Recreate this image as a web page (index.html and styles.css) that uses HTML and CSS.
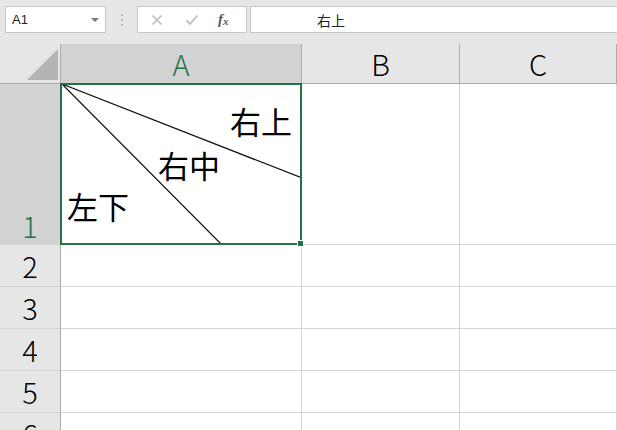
FILE: index.html
```html
<!DOCTYPE html>
<html lang="ja">
<head>
<meta charset="utf-8">
<link rel="stylesheet" href="styles.css">
</head>
<body>
<div class="app">
  <div class="toolbar">
    <div class="namebox">
      <span class="name">A1</span>
      <span class="caret"></span>
    </div>
    <div class="dots"><i></i><i></i><i></i></div>
    <div class="fbtns">
      <svg class="ico" width="12" height="12" viewBox="0 0 12 12"><path d="M1.5 1.5 L10.5 10.5 M10.5 1.5 L1.5 10.5" stroke="#bcbcbc" stroke-width="1.6" fill="none"/></svg>
      <svg class="ico" width="14" height="12" viewBox="0 0 14 12"><path d="M1.5 6.5 L5 10 L12.5 1.5" stroke="#bcbcbc" stroke-width="1.8" fill="none"/></svg>
      <span class="fx">f<span class="fxx">x</span></span>
    </div>
    <div class="finput"><span class="ftext">右上</span></div>
  </div>
  <div class="sheet">
    <div class="corner"><span class="tri"></span></div>
    <div class="ch sel">A</div>
    <div class="ch">B</div>
    <div class="ch">C</div>

    <div class="rh sel r1">1</div>
    <div class="cell a1">
      <svg class="diag" width="241" height="161" viewBox="0 0 241 161">
        <path d="M1 0 L241 94 M1 0 L161 161" stroke="#111" stroke-width="1.2" fill="none"/>
      </svg>
      <span class="t t-ru">右上</span>
      <span class="t t-rm">右中</span>
      <span class="t t-ld">左下</span>
      <div class="selbox"><span class="handle"></span></div>
    </div>
    <div class="cell"></div>
    <div class="cell"></div>

    <div class="rh">2</div><div class="cell"></div><div class="cell"></div><div class="cell"></div>
    <div class="rh">3</div><div class="cell"></div><div class="cell"></div><div class="cell"></div>
    <div class="rh">4</div><div class="cell"></div><div class="cell"></div><div class="cell"></div>
    <div class="rh">5</div><div class="cell"></div><div class="cell"></div><div class="cell"></div>
    <div class="rh">6</div><div class="cell"></div><div class="cell"></div><div class="cell"></div>
  </div>
</div>
</body>
</html>
```
FILE: styles.css
```css
html, body {
  margin: 0;
  padding: 0;
  width: 617px;
  height: 430px;
  overflow: hidden;
  background: #ffffff;
  font-family: "Noto Sans CJK JP", "Noto Sans", sans-serif;
}
.app {
  width: 617px;
  height: 430px;
  overflow: hidden;
  background: #e6e6e6;
}
.toolbar {
  height: 44px;
  box-sizing: border-box;
  padding-top: 6px;
  padding-left: 5px;
  display: flex;
  align-items: flex-start;
  background: #e6e6e6;
}
.namebox {
  width: 101px;
  height: 27px;
  box-sizing: border-box;
  border: 1px solid #c6c6c6;
  background: #fff;
  display: flex;
  align-items: center;
  justify-content: space-between;
  padding: 0 6px 0 6px;
}
.name {
  font-family: "Liberation Sans", "Noto Sans", sans-serif;
  font-size: 13px;
  color: #222;
}
.caret {
  width: 0;
  height: 0;
  border-left: 4px solid transparent;
  border-right: 4px solid transparent;
  border-top: 4px solid #7a7a7a;
}
.dots {
  width: 31px;
  height: 27px;
  display: flex;
  flex-direction: column;
  align-items: center;
  justify-content: center;
  gap: 3px;
}
.dots i {
  width: 2px;
  height: 2px;
  background: #b4b4b4;
}
.fbtns {
  width: 110px;
  height: 27px;
  box-sizing: border-box;
  border: 1px solid #c6c6c6;
  background: #fff;
  display: flex;
  align-items: center;
  padding-left: 13px;
  gap: 22px;
}
.fx {
  font-family: "Liberation Serif", "DejaVu Serif", serif;
  font-style: italic;
  font-weight: bold;
  font-size: 15px;
  color: #5a5a5a;
  margin-left: -3px;
  line-height: 1;
}
.fxx {
  font-size: 11px;
  position: relative;
  top: 1px;
}
.finput {
  margin-left: 3px;
  flex: 1;
  height: 27px;
  box-sizing: border-box;
  border: 1px solid #c6c6c6;
  border-right: none;
  background: #fff;
  display: flex;
  align-items: center;
  padding-left: 66px;
}
.ftext {
  font-size: 14px;
  color: #222;
}
.sheet {
  display: grid;
  grid-template-columns: 61px 241px 158px 157px;
  grid-template-rows: 40px 161px 42px 42px 42px 42px 42px;
  background: #fff;
}
.corner {
  background: #e6e6e6;
  border-right: 1px solid #ababab;
  border-bottom: 1px solid #ababab;
  position: relative;
}
.tri {
  position: absolute;
  right: 2px;
  bottom: 3px;
  width: 0;
  height: 0;
  border-left: 31px solid transparent;
  border-bottom: 31px solid #b4b4b4;
}
.ch {
  background: #e6e6e6;
  border-bottom: 1px solid #ababab;
  border-right: 1px solid #ababab;
  display: flex;
  align-items: flex-end;
  justify-content: center;
  font-size: 29px;
  line-height: 1;
  padding-bottom: 5px;
  box-sizing: border-box;
  color: #000;
  font-weight: 300;
}
.ch.sel {
  background: #d2d2d2;
  color: #217346;
}
.rh {
  background: #e6e6e6;
  border-right: 1px solid #ababab;
  border-bottom: 1px solid #d4d4d4;
  display: flex;
  align-items: center;
  justify-content: center;
  font-size: 29px;
  line-height: 1;
  color: #000;
  font-weight: 300;
  box-sizing: border-box;
}
.rh.sel {
  background: #d2d2d2;
  color: #217346;
  align-items: flex-end;
  padding-bottom: 4px;
}
.cell {
  border-right: 1px solid #d4d4d4;
  border-bottom: 1px solid #d4d4d4;
  box-sizing: border-box;
  background: #fff;
}
.a1 {
  position: relative;
}
.diag {
  position: absolute;
  left: 0;
  top: 0;
}
.t {
  position: absolute;
  font-size: 31px;
  line-height: 1;
  color: #000;
  white-space: nowrap;
}
.t-ru { left: 169px; top: 21px; }
.t-rm { left: 97px; top: 65px; }
.t-ld { left: 6px; top: 106px; }
.selbox {
  position: absolute;
  left: -1px;
  top: -1px;
  width: 242px;
  height: 162px;
  box-sizing: border-box;
  border: 2px solid #217346;
}
.handle {
  position: absolute;
  right: -4px;
  bottom: -4px;
  width: 5px;
  height: 5px;
  background: #217346;
  border: 1px solid #fff;
}
```
